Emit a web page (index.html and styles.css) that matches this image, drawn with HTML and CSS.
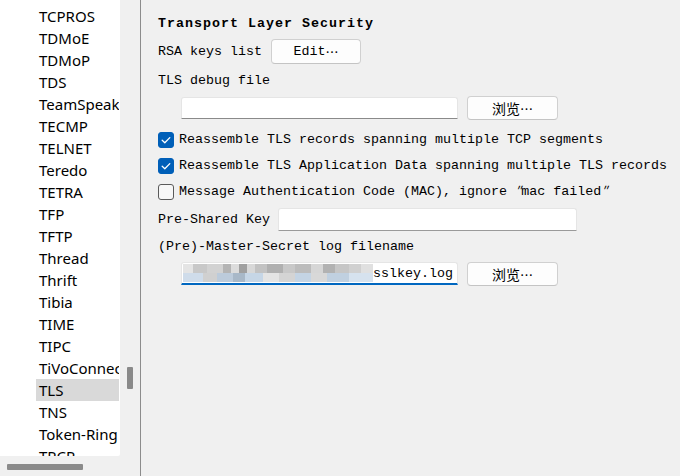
FILE: index.html
```html
<!DOCTYPE html>
<html>
<head>
<meta charset="utf-8">
<link rel="stylesheet" href="styles.css">
</head>
<body>
<div class="app">
  <aside class="side">
    <div class="list-area">
      <div class="list">
        <ul class="items">
          <li class="item">TCPROS</li>
          <li class="item">TDMoE</li>
          <li class="item">TDMoP</li>
          <li class="item">TDS</li>
          <li class="item">TeamSpeak</li>
          <li class="item">TECMP</li>
          <li class="item">TELNET</li>
          <li class="item">Teredo</li>
          <li class="item">TETRA</li>
          <li class="item">TFP</li>
          <li class="item">TFTP</li>
          <li class="item">Thread</li>
          <li class="item">Thrift</li>
          <li class="item">Tibia</li>
          <li class="item">TIME</li>
          <li class="item">TIPC</li>
          <li class="item">TiVoConnect</li>
          <li class="item selected">TLS</li>
          <li class="item">TNS</li>
          <li class="item">Token-Ring</li>
          <li class="item">TPCP</li>
        </ul>
      </div>
      <div class="vscroll"><div class="vthumb"></div></div>
    </div>
    <div class="hscroll"><div class="hthumb"></div></div>
  </aside>
  <main class="panel">
    <div class="title">Transport Layer Security</div>
    <div class="row row-rsa">
      <span class="label">RSA keys list</span>
      <button class="btn btn-edit">Edit<span class="ell">…</span></button>
    </div>
    <div class="label-row">TLS debug file</div>
    <div class="row row-file">
      <div class="textbox tb-file"></div>
      <button class="btn btn-browse">浏览<span class="ell">…</span></button>
    </div>
    <label class="check-row row-cb1"><span class="cb checked"><svg viewBox="0 0 16 16" width="16" height="16"><path d="M4.2 8.3 L6.8 10.8 L11.8 5.6" fill="none" stroke="#fff" stroke-width="1.3" stroke-linecap="round" stroke-linejoin="round"/></svg></span><span class="cb-text">Reassemble TLS records spanning multiple TCP segments</span></label>
    <label class="check-row"><span class="cb checked"><svg viewBox="0 0 16 16" width="16" height="16"><path d="M4.2 8.3 L6.8 10.8 L11.8 5.6" fill="none" stroke="#fff" stroke-width="1.3" stroke-linecap="round" stroke-linejoin="round"/></svg></span><span class="cb-text">Reassemble TLS Application Data spanning multiple TLS records</span></label>
    <label class="check-row"><span class="cb"></span><span class="cb-text">Message Authentication Code (MAC), ignore <span class="q">″</span>mac failed<span class="q">″</span></span></label>
    <div class="row row-psk">
      <span class="label">Pre-Shared Key</span>
      <div class="textbox tb-psk"></div>
    </div>
    <div class="label-row label-pms">(Pre)-Master-Secret log filename</div>
    <div class="row row-file row-pms">
      <div class="textbox tb-file focused">
        <div class="blur"></div>
        <span class="tb-text">sslkey.log</span>
      </div>
      <button class="btn btn-browse">浏览<span class="ell">…</span></button>
    </div>
  </main>
</div>
</body>
</html>
```
FILE: styles.css
```css
html, body {
  margin: 0;
  padding: 0;
  background: #f0f0f0;
}
body {
  width: 680px;
  height: 476px;
  overflow: hidden;
}
.app {
  display: flex;
  height: 476px;
}
.side {
  width: 140px;
  border-right: 1px solid #8c8c8c;
  display: flex;
  flex-direction: column;
  flex: none;
}
.list-area {
  display: flex;
  height: 456px;
}
.list {
  width: 120px;
  height: 456px;
  background: #fff;
  overflow: hidden;
  border-bottom-right-radius: 2px;
}
.items {
  list-style: none;
  margin: 0;
  padding: 5px 0 0 36px;
  font-family: "Noto Sans", "Open Sans", sans-serif;
  font-size: 15px;
  color: #000;
}
.item {
  height: 22px;
  line-height: 22px;
  padding-left: 3px;
  white-space: nowrap;
  overflow: hidden;
  width: 80px;
}
.item.selected {
  background: #d9d9d9;
}
.vscroll {
  width: 20px;
  position: relative;
}
.vthumb {
  position: absolute;
  left: 7px;
  top: 367px;
  width: 6px;
  height: 22px;
  background: #8a8a8a;
  border-radius: 1px;
}
.hscroll {
  height: 20px;
  position: relative;
}
.hthumb {
  position: absolute;
  left: 7px;
  top: 8px;
  width: 76px;
  height: 6px;
  background: #8a8a8a;
  border-radius: 1px;
}
.panel {
  flex: 1;
  padding: 14px 0 0 17px;
  font-family: "Liberation Mono", "DejaVu Sans Mono", monospace;
  font-size: 13.33px;
  color: #000;
  display: flex;
  flex-direction: column;
}
.title {
  height: 20px;
  line-height: 20px;
  font-weight: bold;
  letter-spacing: 1px;
}
.row {
  display: flex;
  align-items: center;
}
.row-rsa {
  margin-top: 4px;
  height: 26px;
}
.label {
  white-space: nowrap;
}
.btn {
  font-family: "Liberation Mono", "Noto Sans CJK SC", monospace;
  font-size: 13.33px;
  color: #000;
  background: #fdfdfd;
  border: 1px solid #d0d0d0;
  border-bottom-color: #c4c4c4;
  border-radius: 4px;
  padding: 0;
  display: flex;
  align-items: center;
  justify-content: center;
}
.btn-edit {
  margin-left: 9px;
  width: 90px;
  height: 25px;
}
.ell {
  font-family: "Noto Sans CJK SC", sans-serif;
  font-size: 13px;
}
.cb-text {
  line-height: 16px;
}
.q {
  font-family: "Noto Sans CJK SC", sans-serif;
  font-style: italic;
  line-height: 1;
  vertical-align: top;
}
.label-row {
  margin-top: 8px;
  height: 18px;
  line-height: 18px;
}
.row-file {
  margin-top: 6px;
  height: 24px;
}
.textbox {
  background: #fff;
  border: 1px solid #e5e5e5;
  border-bottom: 1px solid #8a8a8a;
  border-radius: 3px 3px 0 0;
  box-sizing: border-box;
}
.tb-file {
  margin-left: 23px;
  width: 277px;
  height: 22px;
}
.btn-browse {
  margin-left: 9px;
  width: 91px;
  height: 24px;
  font-family: "Noto Sans CJK SC", sans-serif;
  font-size: 14px;
}
.check-row {
  display: flex;
  align-items: center;
  height: 26px;
  white-space: nowrap;
}
.row-cb1 {
  margin-top: 7px;
}
.cb {
  width: 16px;
  height: 16px;
  box-sizing: border-box;
  border: 1px solid #5a5a5a;
  border-radius: 3px;
  background: #f7f7f7;
  margin-right: 5px;
  flex: none;
  display: flex;
}
.cb.checked {
  background: #005fb8;
  border-color: #005fb8;
}
.cb.checked svg {
  margin: -1px;
}
.row-psk {
  margin-top: 1px;
  height: 26px;
}
.tb-psk {
  margin-left: 8px;
  width: 299px;
  height: 23px;
  border-bottom-color: #9a9a9a;
}
.label-pms {
  margin-top: 6px;
}
.row-pms {
  align-items: flex-start;
  height: 24px;
}
.tb-file.focused {
  height: 23px;
  border-bottom: 2px solid #0067c0;
  display: flex;
  align-items: center;
  padding-left: 1px;
}
.blur {
  width: 190px;
  height: 18px;
  background:
    linear-gradient(90deg, #e4e4e4 0 10px, #c8c8c8 10px 24px, #d2d2d2 24px 40px, #b4b4b4 40px 48px, #dcdcdc 48px 56px, #a0a0a0 56px 64px, #d8d8d8 64px 72px, #c2c2c2 72px 84px, #b0b0b0 84px 100px, #c8c8c8 100px 112px, #bcbcbc 112px 128px, #d6d6d6 128px 140px, #b2b2b2 140px 152px, #c6c6c6 152px 166px, #d0d0d0 166px 178px, #e0e0e0 178px 190px) top / 100% 9px no-repeat,
    linear-gradient(90deg, #cfdcea 0 20px, #d0d0d0 20px 34px, #bccbdb 34px 50px, #a8b8c8 50px 62px, #c6d6e6 62px 80px, #e4e4e4 80px 96px, #d4d4d4 96px 112px, #c4d4e4 112px 128px, #d8d8d8 128px 144px, #c0d0e0 144px 166px, #d6e2ee 166px 190px) bottom / 100% 9px no-repeat;
}
.tb-text {
  margin-left: 0;
  white-space: nowrap;
}
```
